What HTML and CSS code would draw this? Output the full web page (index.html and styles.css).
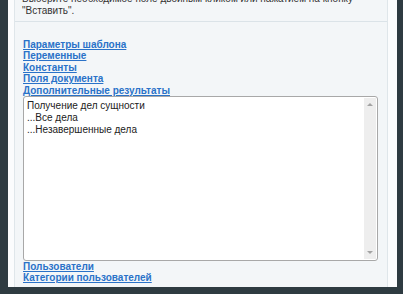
FILE: index.html
```html
<!DOCTYPE html>
<html lang="ru">
<head>
    <meta charset="UTF-8">
    <meta name="viewport" content="width=device-width, initial-scale=1.0">
    <title>Вставка поля</title>
    <link rel="stylesheet" href="styles.css">
</head>
<body>
    <div class="dialog">
        <div class="panel">
            <div class="hint">
                Выберите необходимое поле двойным кликом или нажатием на кнопку<br>
                "Вставить".
            </div>
            <div class="fields">
                <a href="#" class="group">Параметры шаблона</a>
                <a href="#" class="group">Переменные</a>
                <a href="#" class="group">Константы</a>
                <a href="#" class="group">Поля документа</a>
                <a href="#" class="group">Дополнительные результаты</a>
                <div class="list">
                    <div class="items">
                        <div class="item">Получение дел сущности</div>
                        <div class="item">...Все дела</div>
                        <div class="item">...Незавершенные дела</div>
                    </div>
                    <div class="scrollbar">
                        <span class="arrow up"></span>
                        <span class="arrow down"></span>
                    </div>
                </div>
                <a href="#" class="group">Пользователи</a>
                <a href="#" class="group">Категории пользователей</a>
            </div>
        </div>
    </div>
</body>
</html>
```

FILE: styles.css
```css
body {
    margin: 0;
    height: 294px;
    overflow: hidden;
    background-color: #2e3b41; /* тёмный фон за окном */
    font-family: "Liberation Sans", Arial, sans-serif;
    font-size: 10px;
    color: #333;
}

.dialog {
    margin: 0 6px 0 8px;
    height: 294px;
    padding: 0 9px 0 6px;
    background-color: #fbfcfd;
}

.panel {
    height: 100%;
    border-left: 1px solid #dfe6ea;
    border-right: 1px solid #dfe6ea;
    background-color: #f3f6f8;
}

.hint {
    margin-top: -7px;
    padding: 0 0 4px 7px;
    line-height: 12px;
    border-bottom: 1px solid #dbe3e8;
}

.fields {
    padding: 17px 9px 0 8px;
}

.group {
    display: block;
    width: max-content;
    line-height: 11.4px;
    font-weight: bold;
    color: #2a72c8;
    text-decoration: underline;
}

.list {
    display: flex;
    height: 163px;
    border: 1px solid #a8a8a8;
    border-radius: 3px;
    background-color: #fff;
}

.items {
    flex: 1;
    padding: 3px 0 0 3px;
    color: #222;
}

.item {
    line-height: 12px;
}

.scrollbar {
    width: 12px;
    margin: 1px 1px 1px 0;
    display: flex;
    flex-direction: column;
    justify-content: space-between;
    align-items: center;
    padding: 5px 0;
    background-color: #eeeeee;
}

.arrow {
    width: 0;
    height: 0;
    border-left: 3px solid transparent;
    border-right: 3px solid transparent;
}

.arrow.up {
    border-bottom: 3px solid #a3a3a3;
}

.arrow.down {
    border-top: 3px solid #a3a3a3;
}
```
